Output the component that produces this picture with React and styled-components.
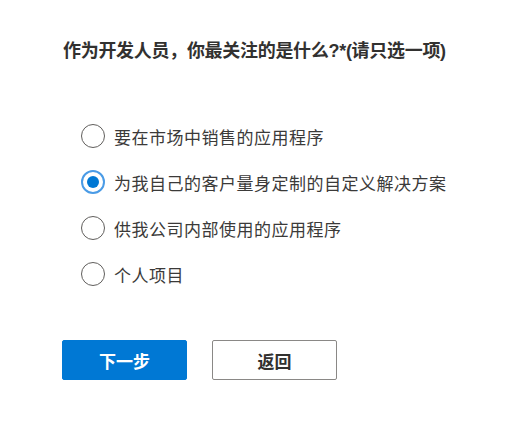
import React, { useState } from 'react'
import styled, { createGlobalStyle } from 'styled-components'

const GlobalStyle = createGlobalStyle`
  html, body {
    margin: 0;
    padding: 0;
    background: #fff;
  }
  body {
    font-family: "Liberation Sans", "Noto Sans CJK SC", sans-serif;
  }
`

const options = [
  '要在市场中销售的应用程序',
  '为我自己的客户量身定制的自定义解决方案',
  '供我公司内部使用的应用程序',
  '个人项目',
]

function App() {
  const [picked, setPicked] = useState(1)

  return (
    <Page>
      <GlobalStyle />
      <Title>作为开发人员，你最关注的是什么?*(请只选一项)</Title>
      <OptionList>
        {options.map((text, i) => (
          <OptionRow key={text}>
            <Radio
              type="radio"
              name="focus"
              checked={picked === i}
              onChange={() => setPicked(i)}
            />
            <OptionText>{text}</OptionText>
          </OptionRow>
        ))}
      </OptionList>
      <Buttons>
        <Button $primary>下一步</Button>
        <Button>返回</Button>
      </Buttons>
    </Page>
  )
}

const Page = styled.div`
  padding: 39px 0 0 63px;
`

const Title = styled.h1`
  margin: 0;
  font-size: 18px;
  line-height: 24px;
  letter-spacing: -0.3px;
  font-weight: bold;
  color: #323130;
`

const OptionList = styled.div`
  display: flex;
  flex-direction: column;
  margin: 50px 0 0 18px;
`

const OptionRow = styled.label`
  display: flex;
  align-items: center;
  height: 46px;
  cursor: pointer;
`

const Radio = styled.input`
  appearance: none;
  -webkit-appearance: none;
  margin: 0 9px 0 0;
  width: 24px;
  height: 24px;
  box-sizing: border-box;
  border-radius: 50%;
  border: 1.5px solid #605e5c;
  background: #fff;
  display: flex;
  align-items: center;
  justify-content: center;
  cursor: pointer;

  &:checked {
    border: 2px solid #4a9be6;
  }

  &:checked::after {
    content: "";
    width: 12px;
    height: 12px;
    border-radius: 50%;
    background: #0078d4;
  }
`

const OptionText = styled.span`
  font-size: 17px;
  letter-spacing: 0.5px;
  color: #3b3a39;
`

const Buttons = styled.div`
  display: flex;
  gap: 25px;
  margin: 43px 0 0 -1px;
`

const Button = styled.button`
  width: 125px;
  height: 40px;
  box-sizing: border-box;
  border-radius: 2px;
  font-family: "Liberation Sans", "Noto Sans CJK SC", sans-serif;
  font-size: 17px;
  font-weight: bold;
  cursor: pointer;
  border: 1px solid ${p => (p.$primary ? '#0078d4' : '#8a8886')};
  background: ${p => (p.$primary ? '#0078d4' : '#fff')};
  color: ${p => (p.$primary ? '#fff' : '#323130')};
`

export default App
